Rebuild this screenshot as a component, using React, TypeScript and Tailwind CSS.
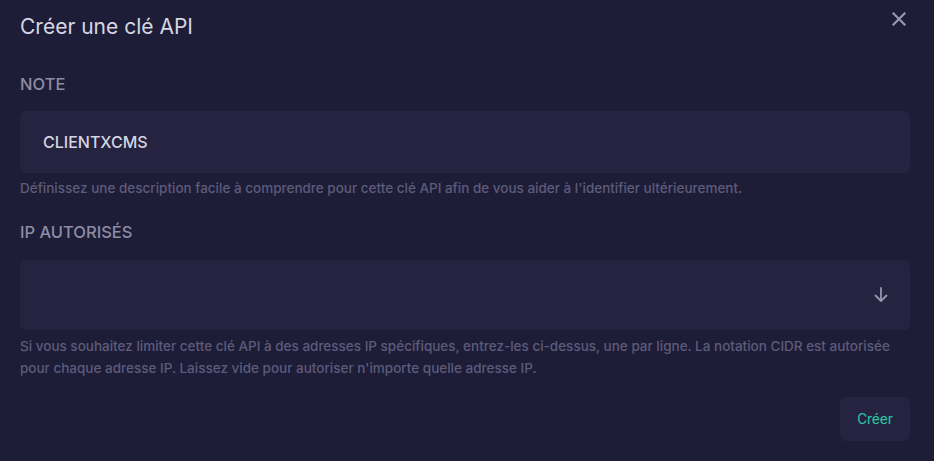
import React from 'react';

// Modal content for creating an API key
const App: React.FC = () => {
  return (
    <div
      className="w-[934px] h-[461px] bg-[#1e1d38] text-[#d4d3e0] relative"
      style={{ fontFamily: 'Inter, "Noto Sans", sans-serif' }}
    >
      {/* Close button */}
      <button className="absolute right-[28px] top-[12px] text-[#9796ad]" aria-label="Fermer">
        <svg width="14" height="14" viewBox="0 0 14 14" fill="none">
          <path d="M1.5 1.5l11 11M12.5 1.5l-11 11" stroke="currentColor" strokeWidth="2.2" strokeLinecap="square" />
        </svg>
      </button>

      <div className="flex flex-col px-5 pt-[13px]">
        <h2 className="text-[21px] leading-[28px] text-[#d6d5e2]">Créer une clé API</h2>

        <label className="mt-[31px] text-[16.5px] font-medium leading-[24px] uppercase text-[#8d8ca3]">Note</label>
        <div className="mt-[15px] h-[62px] w-[890px] rounded-md bg-[#25233f] flex items-center px-[23px]">
          <span className="text-[16px] font-medium text-[#d6d5e2]">CLIENTXCMS</span>
        </div>
        <p className="mt-[5px] text-[13.5px] font-medium leading-[20px] text-[#5d5b7a]">
          Définissez une description facile à comprendre pour cette clé API afin de vous aider à l'identifier ultérieurement.
        </p>

        <label className="mt-[22px] text-[16.5px] font-medium leading-[24px] uppercase text-[#8d8ca3]">IP autorisés</label>
        <div className="mt-[16px] h-[70px] w-[890px] rounded-md bg-[#25233f] flex items-center justify-end pr-[22px]">
          <svg width="14" height="16" viewBox="0 0 14 16" fill="none" className="text-[#9796ad]">
            <path d="M7 1v13M1.5 8.5L7 14l5.5-5.5" stroke="currentColor" strokeWidth="1.8" strokeLinecap="round" strokeLinejoin="round" />
          </svg>
        </div>
        <p className="mt-[5px] text-[13.5px] font-medium leading-[22px] text-[#5d5b7a] w-[890px]">
          Si vous souhaitez limiter cette clé API à des adresses IP spécifiques, entrez-les ci-dessus, une par ligne. La notation CIDR est autorisée pour chaque adresse IP. Laissez vide pour autoriser n'importe quelle adresse IP.
        </p>

        <div className="mt-[18px] flex justify-end w-[890px]">
          <button
            className="h-[44px] w-[70px] rounded-md bg-[#25233f] text-[15px] text-[#2ac3a0]"
            style={{ fontFamily: 'Roboto, sans-serif' }}
          >
            Créer
          </button>
        </div>
      </div>
    </div>
  );
};

export default App;
